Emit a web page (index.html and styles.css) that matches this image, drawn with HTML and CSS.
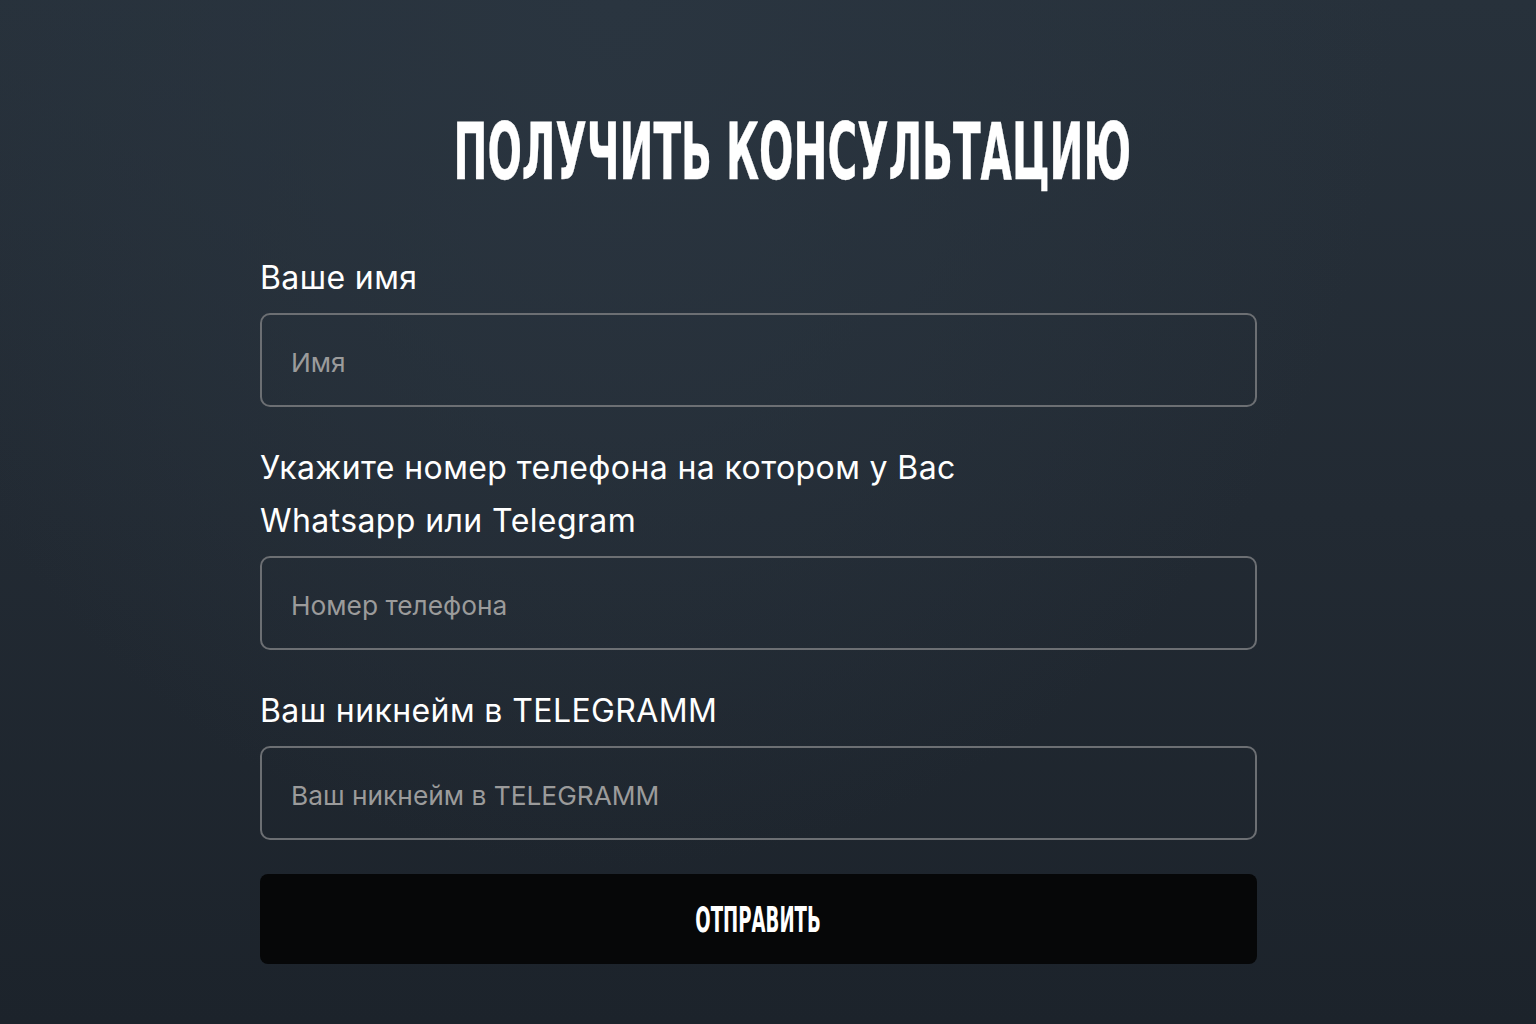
FILE: index.html
```html
<!DOCTYPE html>
<html lang="ru">
<head>
<meta charset="utf-8">
<title>Получить консультацию</title>
<link rel="stylesheet" href="styles.css">
</head>
<body>
<main class="page">
  <section class="consult">
    <h1 class="consult__title"><span class="consult__title-text">ПОЛУЧИТЬ КОНСУЛЬТАЦИЮ</span></h1>
    <form class="form">
      <div class="field">
        <label class="field__label" for="name">Ваше имя</label>
        <input class="field__input" id="name" type="text" placeholder="Имя">
      </div>
      <div class="field">
        <label class="field__label" for="phone">Укажите номер телефона на котором у Вас<br>Whatsapp или Telegram</label>
        <input class="field__input" id="phone" type="tel" placeholder="Номер телефона">
      </div>
      <div class="field">
        <label class="field__label" for="nick">Ваш никнейм в TELEGRAMM</label>
        <input class="field__input" id="nick" type="text" placeholder="Ваш никнейм в TELEGRAMM">
      </div>
      <button class="form__submit" type="button"><span class="form__submit-text">ОТПРАВИТЬ</span></button>
    </form>
  </section>
</main>
</body>
</html>
```
FILE: styles.css
```css
* { box-sizing: border-box; }
html, body { margin: 0; height: 100%; }
body {
  background: radial-gradient(ellipse at 40% 0%, #2a3540 0%, rgba(42,53,64,0) 60%),
              linear-gradient(180deg, #27313b 0%, #222a33 50%, #1c232b 100%);
  color: #fff;
  font-family: Inter, "Liberation Sans", Arial, sans-serif;
  overflow: hidden;
}
.page {
  display: flex;
  justify-content: center;
  padding: 109px 19px 0 0;
  min-height: 100%;
}
.consult { width: 997px; }
.consult__title {
  display: flex;
  justify-content: center;
  margin: 0 0 56px;
  padding-left: 67px;
  font-family: "DejaVu Sans Condensed", "DejaVu Sans", sans-serif;
  font-weight: 700;
  font-size: 79px;
  line-height: 86px;
}
.consult__title-text {
  display: inline-block;
  flex: none;
  transform: scaleX(0.57);
  transform-origin: center;
  white-space: nowrap;
  -webkit-text-stroke: 0.4px #fff;
}
.form { display: flex; flex-direction: column; gap: 34px; }
.field { display: flex; flex-direction: column; gap: 9px; }
.field__label {
  font-size: 32px;
  line-height: 53px;
  letter-spacing: 0.4px;
  color: #fff;
}
.field__input {
  height: 94px;
  width: 100%;
  padding: 5px 29px 0;
  background: transparent;
  border: 2px solid #6c6f73;
  border-radius: 10px;
  font-family: Inter, "Liberation Sans", Arial, sans-serif;
  font-size: 26.3px;
  color: #fff;
  outline: none;
}
.field__input::placeholder { color: #9b9b9b; opacity: 1; }
.form__submit {
  display: flex;
  justify-content: center;
  align-items: center;
  height: 90px;
  width: 100%;
  border: none;
  border-radius: 8px;
  background: #060708;
  color: #fff;
  font-family: "DejaVu Sans Condensed", "DejaVu Sans", sans-serif;
  font-weight: 700;
  font-size: 36px;
  cursor: pointer;
}
.form__submit-text {
  display: inline-block;
  flex: none;
  transform: scaleX(0.56);
  white-space: nowrap;
}
```
